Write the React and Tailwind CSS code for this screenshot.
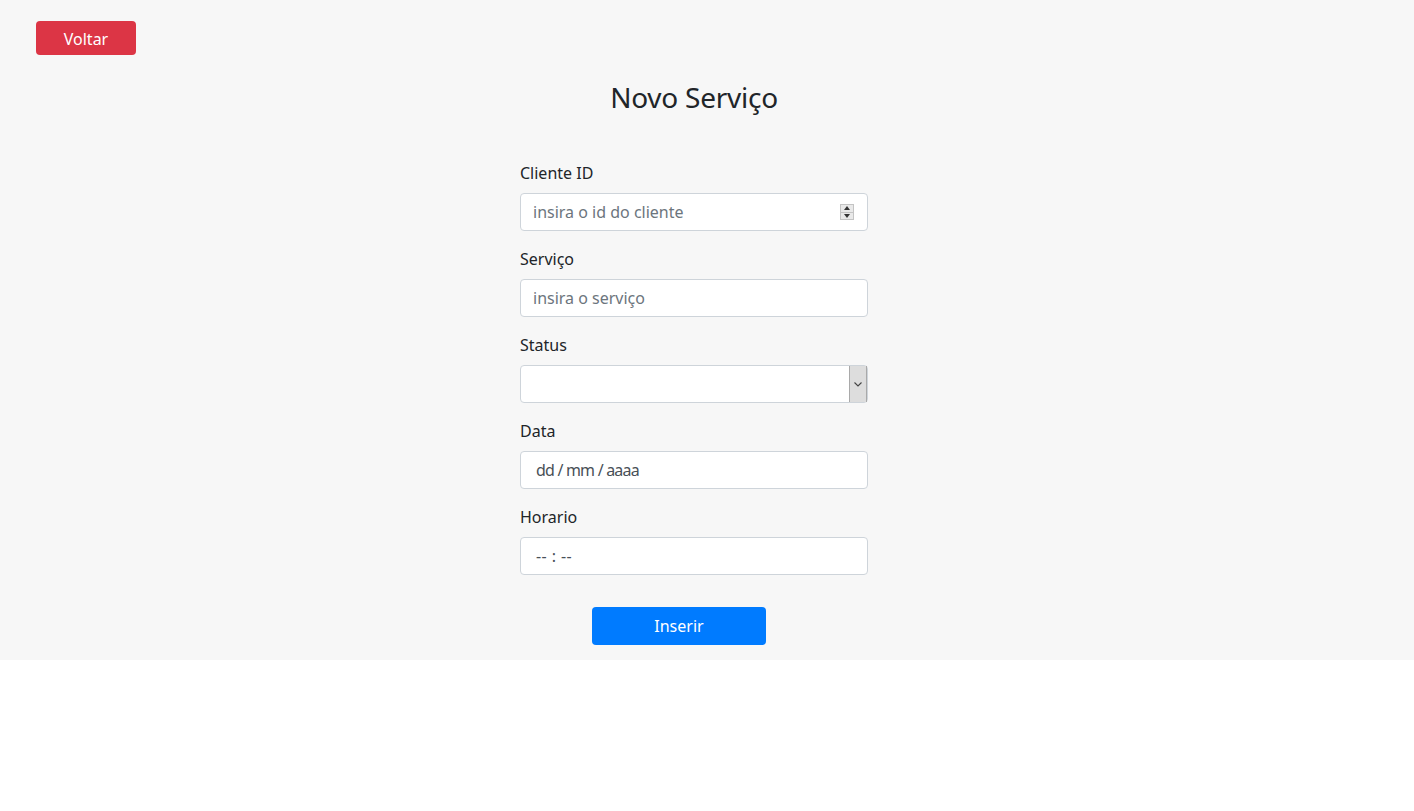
// App.jsx — "Novo Serviço" form
const font = { fontFamily: '"Noto Sans", "Open Sans", Arial, sans-serif' };

function Label({ children }) {
  return <label className="block text-[16px] leading-[24px] text-[#212529] mb-2">{children}</label>;
}

function Field({ children, className = '' }) {
  return (
    <div
      className={`relative flex items-center h-[38px] w-[348px] bg-white border border-[#ced4da] rounded-[4px] text-[16px] ${className}`}
    >
      {children}
    </div>
  );
}

export default function App() {
  return (
    <div className="min-h-[811px] bg-white" style={font}>
      <div className="bg-[#f7f7f7] h-[660px] pt-[21px]">
        <div className="pl-[36px]">
          <button className="h-[34px] w-[100px] pt-px rounded-[4px] bg-[#dc3545] text-white text-[16px] leading-[24px]">
            Voltar
          </button>
        </div>

        <div className="ml-[520px] w-[348px]">
          <h3 className="mt-[25px] text-center text-[28px] leading-[34px] tracking-[-0.25px] text-[#212529]">
            Novo Serviço
          </h3>

          <form className="mt-[47px]">
            {/* Cliente ID */}
            <div className="mb-4">
              <Label>Cliente ID</Label>
              <Field className="pl-3">
                <span className="text-[#6c757d]">insira o id do cliente</span>
                <div className="absolute right-[13px] top-[10px] w-[14px] h-[16px] flex flex-col border border-[#c4c4c4] bg-[#e9e9e9]">
                  <div className="flex-1 flex items-center justify-center border-b border-[#c4c4c4]">
                    <svg width="6" height="4" viewBox="0 0 6 4"><path d="M3 0L6 4H0z" fill="#333" /></svg>
                  </div>
                  <div className="flex-1 flex items-center justify-center">
                    <svg width="6" height="4" viewBox="0 0 6 4"><path d="M0 0h6L3 4z" fill="#333" /></svg>
                  </div>
                </div>
              </Field>
            </div>

            {/* Serviço */}
            <div className="mb-4">
              <Label>Serviço</Label>
              <Field className="pl-3">
                <span className="text-[#6c757d]">insira o serviço</span>
              </Field>
            </div>

            {/* Status */}
            <div className="mb-4">
              <Label>Status</Label>
              <Field>
                <div className="absolute right-0 top-0 bottom-0 w-[18px] bg-[#dddddd] border-l border-r border-[#a9a9a9] flex items-center justify-center">
                  <svg width="8" height="5" viewBox="0 0 8 5">
                    <path d="M0.5 0.5L4 4L7.5 0.5" fill="none" stroke="#444" strokeWidth="1.1" />
                  </svg>
                </div>
              </Field>
            </div>

            {/* Data */}
            <div className="mb-4">
              <Label>Data</Label>
              <Field className="pl-[15px]">
                <span className="text-[#495057] tracking-[-0.8px]">dd / mm / aaaa</span>
              </Field>
            </div>

            {/* Horario */}
            <div>
              <Label>Horario</Label>
              <Field className="pl-[15px]">
                <span className="text-[#495057] tracking-[0.4px]">-- : --</span>
              </Field>
            </div>

            <div className="mt-8 pl-[72px]">
              <button
                type="button"
                className="h-[38px] w-[174px] rounded-[4px] bg-[#007bff] text-white text-[16px] leading-[24px]"
              >
                Inserir
              </button>
            </div>
          </form>
        </div>
      </div>
    </div>
  );
}
